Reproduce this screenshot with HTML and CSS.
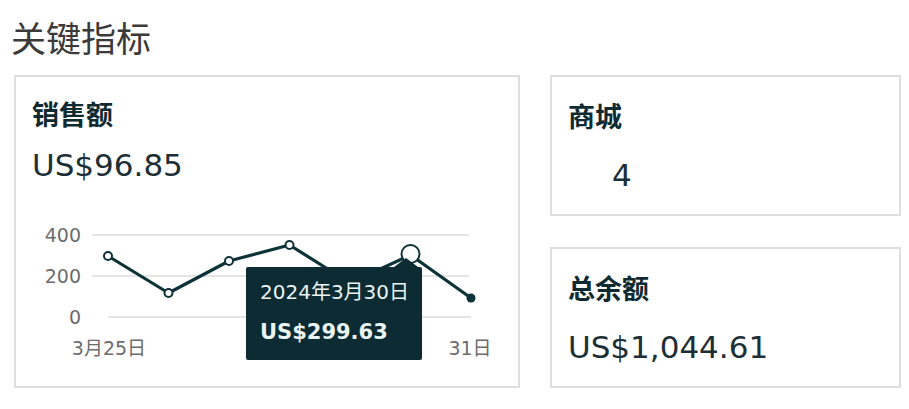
FILE: index.html
```html
<!DOCTYPE html>
<html lang="zh-CN">
<head>
<meta charset="utf-8">
<title>关键指标</title>
<link rel="stylesheet" href="styles.css">
</head>
<body>
<div class="page">
  <h1 class="page-title">关键指标</h1>
  <div class="metrics">
    <section class="card card-sales">
      <h2 class="card-title">销售额</h2>
      <div class="card-value">US$96.85</div>
      <div class="chart">
        <svg class="chart-svg" width="470" height="150" viewBox="0 0 470 150">
          <g class="grid">
            <line x1="60" y1="15" x2="437" y2="15"/>
            <line x1="60" y1="56" x2="437" y2="56"/>
            <line x1="76" y1="97" x2="439" y2="97"/>
          </g>
          <g class="axis-y">
            <text x="49" y="22">400</text>
            <text x="49" y="63">200</text>
            <text x="49" y="104">0</text>
          </g>
          <g class="axis-x">
            <text x="77" y="135">3月25日</text>
            <text x="438" y="135">31日</text>
          </g>
          <polyline class="series" points="76,36 136.5,73 197,41 257.5,25 318,63 378.5,35 439,78"/>
          <g class="dots">
            <circle cx="76" cy="36" r="4"/>
            <circle cx="136.5" cy="73" r="4"/>
            <circle cx="197" cy="41" r="4"/>
            <circle cx="257.5" cy="25" r="4"/>
            <circle cx="318" cy="63" r="4"/>
          </g>
          <circle class="dot-active" cx="378.5" cy="34" r="9"/>
          <circle class="dot-last" cx="439" cy="78" r="4.5"/>
        </svg>
        <div class="tooltip">
          <div class="tooltip-date">2024年3月30日</div>
          <div class="tooltip-value">US$299.63</div>
        </div>
      </div>
    </section>
    <section class="card card-small">
      <h2 class="card-title">商城</h2>
      <div class="card-value card-value-indent">4</div>
    </section>
    <section class="card card-small">
      <h2 class="card-title">总余额</h2>
      <div class="card-value">US$1,044.61</div>
    </section>
  </div>
</div>
</body>
</html>
```

FILE: styles.css
```css
html, body {
  margin: 0;
  padding: 0;
  background: #ffffff;
}

body {
  font-family: "DejaVu Sans", "Noto Sans CJK SC", sans-serif;
  color: #1d2f36;
}

.page {
  padding: 16px 8px 0 14px;
}

.page-title {
  margin: 0 0 0 -3px;
  font-family: "Noto Sans CJK SC", sans-serif;
  font-weight: 400;
  font-size: 35px;
  line-height: 42px;
  height: 42px;
  color: #3a3a3a;
}

.metrics {
  margin-top: 17px;
  display: grid;
  grid-template-columns: 506px 351px;
  grid-template-rows: 141px 141px;
  column-gap: 30px;
  row-gap: 31px;
}

.card {
  box-sizing: border-box;
  border: 2px solid #dedede;
  background: #fff;
  padding: 20px 16px 0 16px;
}

.card-sales {
  grid-row: 1 / span 2;
  padding-top: 18px;
}

.card-title {
  margin: 0;
  font-family: "Noto Sans CJK SC", sans-serif;
  font-weight: 700;
  font-size: 27px;
  line-height: 38px;
  color: #0f2a30;
}

.card-value {
  margin-top: 22px;
  font-size: 31px;
  line-height: 36px;
  color: #1d2f36;
  white-space: nowrap;
}

.card-sales .card-value {
  margin-top: 14px;
  line-height: 37px;
}

.card-value-indent {
  padding-left: 44px;
}

.chart {
  position: relative;
  margin-top: 36px;
  width: 470px;
  height: 150px;
}

.chart-svg {
  display: block;
  overflow: visible;
}

.grid line {
  stroke: #dcdcdc;
  stroke-width: 1.5;
}

.axis-y text {
  font-family: "DejaVu Sans", sans-serif;
  font-size: 19px;
  fill: #6c6c6c;
  text-anchor: end;
}

.axis-x text {
  font-family: "DejaVu Sans", "Noto Sans CJK SC", sans-serif;
  font-size: 19px;
  fill: #6c6c6c;
  text-anchor: middle;
}

.series {
  fill: none;
  stroke: #0d3338;
  stroke-width: 3.2;
  stroke-linejoin: round;
}

.dots circle {
  fill: #ffffff;
  stroke: #0d3338;
  stroke-width: 2;
}

.dot-active {
  fill: #ffffff;
  stroke: #0d3338;
  stroke-width: 2;
}

.dot-last {
  fill: #0d3338;
}

.tooltip {
  position: absolute;
  left: 214px;
  top: 47px;
  width: 176px;
  height: 93px;
  box-sizing: border-box;
  padding: 12px 8px 0 14px;
  background: #0c2b33;
  color: #eaf4f3;
  border-radius: 2px;
}

.tooltip::before {
  content: "";
  position: absolute;
  left: 148px;
  top: -9px;
  border-left: 12px solid transparent;
  border-right: 12px solid transparent;
  border-bottom: 9px solid #0c2b33;
}

.tooltip-date {
  font-family: "DejaVu Sans", "Noto Sans CJK SC", sans-serif;
  font-size: 20px;
  line-height: 26px;
  white-space: nowrap;
}

.tooltip-value {
  margin-top: 14px;
  font-size: 21px;
  font-weight: 700;
  line-height: 27px;
  white-space: nowrap;
}
```
